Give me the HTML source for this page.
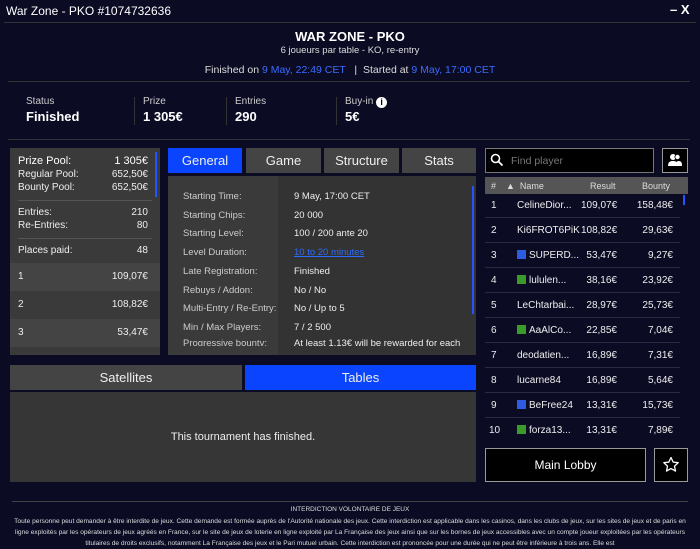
<!DOCTYPE html>
<html><head><meta charset="utf-8"><style>
*{margin:0;padding:0;box-sizing:border-box}
body{width:700px;height:546px;overflow:hidden;background:#0b0b24;color:#fff;font-family:"Liberation Sans",sans-serif;position:relative}
.a{position:absolute;white-space:nowrap}
.lbl{font-size:10px;color:#ccc}
.val{font-size:13px;font-weight:bold}
.blue{color:#3b6cff}
.tab{position:absolute;height:25px;background:#444;font-size:13px;text-align:center;line-height:25px;color:#eee}
.tab.on{background:#0a44ff}
.kv{font-size:10px;color:#eee}
.row{position:absolute;left:485px;width:115px;height:25px;border-bottom:1px solid #2a2a44}
.pr{position:absolute;font-size:10px;color:#eee}
.sq{display:inline-block;width:9px;height:9px;margin-right:3px;vertical-align:-1px}
</style></head><body>
<div class="a" style="left:6px;top:4px;font-size:12px">War Zone - PKO #1074732636</div>
<div class="a" style="left:670px;top:2px;font-size:13px;font-weight:bold">– X</div>
<div class="a" style="left:4px;top:22px;width:692px;height:1px;background:#333"></div>
<div class="a" style="left:0;top:29px;width:700px;text-align:center;font-size:13px;font-weight:bold">WAR ZONE - PKO</div>
<div class="a" style="left:0;top:45px;width:700px;text-align:center;font-size:9.5px;color:#ddd">6 joueurs par table - KO, re-entry</div>
<div class="a" style="left:0;top:64px;width:700px;text-align:center;font-size:10.5px;color:#ddd">Finished on <span class="blue">9 May, 22:49 CET</span> &nbsp;&nbsp;| &nbsp;Started at <span class="blue">9 May, 17:00 CET</span></div>
<div class="a" style="left:8px;top:81px;width:682px;height:1px;background:#333"></div>
<div class="a lbl" style="left:26px;top:96px">Status</div><div class="a val" style="left:26px;top:109px">Finished</div>
<div class="a" style="left:134px;top:97px;width:1px;height:28px;background:#333"></div>
<div class="a lbl" style="left:143px;top:96px">Prize</div><div class="a val" style="left:143px;top:109px">1 305€</div>
<div class="a" style="left:226px;top:97px;width:1px;height:28px;background:#333"></div>
<div class="a lbl" style="left:235px;top:96px">Entries</div><div class="a val" style="left:235px;top:109px">290</div>
<div class="a" style="left:336px;top:97px;width:1px;height:28px;background:#333"></div>
<div class="a lbl" style="left:345px;top:96px">Buy-in <span style="display:inline-block;width:11px;height:11px;border-radius:50%;background:#fff;color:#000;font-size:9px;font-weight:bold;text-align:center;line-height:11px;vertical-align:-1px">i</span></div><div class="a val" style="left:345px;top:109px">5€</div>
<div class="a" style="left:8px;top:139px;width:682px;height:1px;background:#333"></div>

<!-- left panel -->
<div class="a" style="left:10px;top:148px;width:150px;height:207px;background:#3a3a3a"></div>
<div class="a" style="left:155px;top:152px;width:2px;height:45px;background:#2255ff"></div>
<div class="a" style="left:18px;top:155px;font-size:11px">Prize Pool:</div><div class="a" style="left:110px;top:155px;width:38px;text-align:right;font-size:11px">1 305€</div>
<div class="a kv" style="left:18px;top:169px">Regular Pool:</div><div class="a kv" style="left:100px;top:169px;width:48px;text-align:right">652,50€</div>
<div class="a kv" style="left:18px;top:182px">Bounty Pool:</div><div class="a kv" style="left:100px;top:182px;width:48px;text-align:right">652,50€</div>
<div class="a" style="left:18px;top:200px;width:134px;height:1px;background:#555"></div>
<div class="a kv" style="left:18px;top:207px">Entries:</div><div class="a kv" style="left:100px;top:207px;width:48px;text-align:right">210</div>
<div class="a kv" style="left:18px;top:220px">Re-Entries:</div><div class="a kv" style="left:100px;top:220px;width:48px;text-align:right">80</div>
<div class="a" style="left:18px;top:238px;width:134px;height:1px;background:#555"></div>
<div class="a kv" style="left:18px;top:245px">Places paid:</div><div class="a kv" style="left:100px;top:245px;width:48px;text-align:right">48</div>
<div class="a" style="left:10px;top:263px;width:150px;height:28px;background:#444"></div>
<div class="a" style="left:10px;top:319px;width:150px;height:28px;background:#444"></div>
<div class="a kv" style="left:18px;top:271px">1</div><div class="a kv" style="left:100px;top:271px;width:48px;text-align:right">109,07€</div>
<div class="a kv" style="left:18px;top:299px">2</div><div class="a kv" style="left:100px;top:299px;width:48px;text-align:right">108,82€</div>
<div class="a kv" style="left:18px;top:327px">3</div><div class="a kv" style="left:100px;top:327px;width:48px;text-align:right">53,47€</div>

<!-- tabs -->
<div class="tab on" style="left:168px;top:148px;width:74px">General</div>
<div class="tab" style="left:246px;top:148px;width:75px">Game</div>
<div class="tab" style="left:324px;top:148px;width:75px">Structure</div>
<div class="tab" style="left:402px;top:148px;width:74px">Stats</div>
<div class="a" style="left:168px;top:176px;width:110px;height:179px;background:#3a3a3a"></div>
<div class="a" style="left:278px;top:176px;width:198px;height:179px;background:#333;overflow:hidden"></div>
<div class="a" style="left:472px;top:186px;width:2px;height:128px;background:#2255ff"></div>
<div style="position:absolute;left:183px;top:188px;font-size:9.5px;color:#ccc;line-height:18.7px">Starting Time:<br>Starting Chips:<br>Starting Level:<br>Level Duration:<br>Late Registration:<br>Rebuys / Addon:<br>Multi-Entry / Re-Entry:<br>Min / Max Players:</div>
<div style="position:absolute;left:294px;top:188px;font-size:9.5px;color:#eee;line-height:18.7px">9 May, 17:00 CET<br>20 000<br>100 / 200 ante 20<br><span style="color:#2a6cff;text-decoration:underline">10 to 20 minutes</span><br>Finished<br>No / No<br>No / Up to 5<br>7 / 2 500</div>
<div class="a" style="left:168px;top:338px;width:308px;height:8px;overflow:hidden"><div style="position:absolute;left:15px;top:0;font-size:9.5px;color:#ccc">Progressive bounty:</div><div style="position:absolute;left:126px;top:0;font-size:9.5px;color:#eee">At least 1,13€ will be rewarded for each</div></div>

<div class="tab" style="left:10px;top:365px;width:232px">Satellites</div>
<div class="tab on" style="left:245px;top:365px;width:231px">Tables</div>
<div class="a" style="left:10px;top:392px;width:466px;height:90px;background:#363636"></div>
<div class="a" style="left:10px;top:431px;width:466px;text-align:center;font-size:11px;color:#eee">This tournament has finished.</div>

<!-- right -->
<div class="a" style="left:485px;top:148px;width:169px;height:25px;background:#000;border:1px solid #777"></div>
<svg class="a" style="left:490px;top:153px" width="14" height="14" viewBox="0 0 14 14"><circle cx="5.5" cy="5.5" r="4" fill="none" stroke="#fff" stroke-width="1.6"/><path d="M8.5 8.5L12.5 12.5" stroke="#fff" stroke-width="1.8"/></svg>
<div class="a" style="left:511px;top:155px;font-size:10.5px;color:#777">Find player</div>
<div class="a" style="left:662px;top:148px;width:26px;height:25px;background:#000;border:1px solid #999"></div>
<svg class="a" style="left:667px;top:153px" width="16" height="14" viewBox="0 0 16 14"><circle cx="6" cy="4" r="3" fill="#fff"/><path d="M1 13c0-4 2-5 5-5s5 1 5 5z" fill="#fff"/><circle cx="10.5" cy="4" r="2.6" fill="#fff" stroke="#000" stroke-width=".8"/><path d="M9 13c0-3 1-5 2-5c3 0 4 1 4 5z" fill="#fff"/></svg>
<div class="a" style="left:485px;top:177px;width:203px;height:17px;background:#555"></div>
<div class="a" style="left:491px;top:181px;font-size:9px;color:#ddd">#&nbsp;&nbsp;&nbsp;&nbsp;▲&nbsp;&nbsp;Name</div>
<div class="a" style="left:590px;top:181px;font-size:9px;color:#ddd">Result</div>
<div class="a" style="left:642px;top:181px;font-size:9px;color:#ddd">Bounty</div>
<div class="a" style="left:683px;top:195px;width:2px;height:10px;background:#2255ff"></div>
<div style="position:absolute;left:485px;top:193px;width:195px;font-size:10px;color:#eee">
<div style="height:25px;border-bottom:1px solid #2a2a44;position:relative"><span class="a" style="left:6px;top:7px">1</span><span class="a" style="left:32px;top:7px">CelineDior...</span><span class="a" style="left:96px;top:7px;width:36px;text-align:right">109,07€</span><span class="a" style="left:148px;top:7px;width:40px;text-align:right">158,48€</span></div>
<div style="height:25px;border-bottom:1px solid #2a2a44;position:relative"><span class="a" style="left:6px;top:7px">2</span><span class="a" style="left:32px;top:7px">Ki6FROT6PiK</span><span class="a" style="left:96px;top:7px;width:36px;text-align:right">108,82€</span><span class="a" style="left:148px;top:7px;width:40px;text-align:right">29,63€</span></div>
<div style="height:25px;border-bottom:1px solid #2a2a44;position:relative"><span class="a" style="left:6px;top:7px">3</span><span class="a" style="left:32px;top:7px"><i class="sq" style="background:#2f5be0"></i>SUPERD...</span><span class="a" style="left:96px;top:7px;width:36px;text-align:right">53,47€</span><span class="a" style="left:148px;top:7px;width:40px;text-align:right">9,27€</span></div>
<div style="height:25px;border-bottom:1px solid #2a2a44;position:relative"><span class="a" style="left:6px;top:7px">4</span><span class="a" style="left:32px;top:7px"><i class="sq" style="background:#3a9a2a"></i>lululen...</span><span class="a" style="left:96px;top:7px;width:36px;text-align:right">38,16€</span><span class="a" style="left:148px;top:7px;width:40px;text-align:right">23,92€</span></div>
<div style="height:25px;border-bottom:1px solid #2a2a44;position:relative"><span class="a" style="left:6px;top:7px">5</span><span class="a" style="left:32px;top:7px">LeChtarbai...</span><span class="a" style="left:96px;top:7px;width:36px;text-align:right">28,97€</span><span class="a" style="left:148px;top:7px;width:40px;text-align:right">25,73€</span></div>
<div style="height:25px;border-bottom:1px solid #2a2a44;position:relative"><span class="a" style="left:6px;top:7px">6</span><span class="a" style="left:32px;top:7px"><i class="sq" style="background:#3a9a2a"></i>AaAlCo...</span><span class="a" style="left:96px;top:7px;width:36px;text-align:right">22,85€</span><span class="a" style="left:148px;top:7px;width:40px;text-align:right">7,04€</span></div>
<div style="height:25px;border-bottom:1px solid #2a2a44;position:relative"><span class="a" style="left:6px;top:7px">7</span><span class="a" style="left:32px;top:7px">deodatien...</span><span class="a" style="left:96px;top:7px;width:36px;text-align:right">16,89€</span><span class="a" style="left:148px;top:7px;width:40px;text-align:right">7,31€</span></div>
<div style="height:25px;border-bottom:1px solid #2a2a44;position:relative"><span class="a" style="left:6px;top:7px">8</span><span class="a" style="left:32px;top:7px">lucarne84</span><span class="a" style="left:96px;top:7px;width:36px;text-align:right">16,89€</span><span class="a" style="left:148px;top:7px;width:40px;text-align:right">5,64€</span></div>
<div style="height:25px;border-bottom:1px solid #2a2a44;position:relative"><span class="a" style="left:6px;top:7px">9</span><span class="a" style="left:32px;top:7px"><i class="sq" style="background:#2f5be0"></i>BeFree24</span><span class="a" style="left:96px;top:7px;width:36px;text-align:right">13,31€</span><span class="a" style="left:148px;top:7px;width:40px;text-align:right">15,73€</span></div>
<div style="height:25px;position:relative"><span class="a" style="left:4px;top:7px">10</span><span class="a" style="left:32px;top:7px"><i class="sq" style="background:#3a9a2a"></i>forza13...</span><span class="a" style="left:96px;top:7px;width:36px;text-align:right">13,31€</span><span class="a" style="left:148px;top:7px;width:40px;text-align:right">7,89€</span></div>
</div>
<div class="a" style="left:485px;top:448px;width:161px;height:34px;background:#000;border:1px solid #999;text-align:center;line-height:32px;font-size:12px">Main Lobby</div>
<div class="a" style="left:654px;top:448px;width:34px;height:34px;background:#000;border:1px solid #999"></div>
<svg class="a" style="left:662px;top:456px" width="18" height="18" viewBox="0 0 18 18"><path d="M9 1.5l2.2 4.6 5 .6-3.7 3.4 1 5-4.5-2.5-4.5 2.5 1-5L1.8 6.7l5-.6z" fill="none" stroke="#fff" stroke-width="1.3" stroke-linejoin="round"/></svg>

<div class="a" style="left:12px;top:501px;width:676px;height:1px;background:#444"></div>
<div class="a" style="left:0;top:506px;width:700px;text-align:center;font-size:6.5px;color:#ddd">INTERDICTION VOLONTAIRE DE JEUX</div>
<div style="position:absolute;left:10px;top:516px;width:680px;text-align:center;font-size:6.6px;line-height:11px;color:#ddd">Toute personne peut demander à être interdite de jeux. Cette demande est formée auprès de l'Autorité nationale des jeux. Cette interdiction est applicable dans les casinos, dans les clubs de jeux, sur les sites de jeux et de paris en ligne exploités par les opérateurs de jeux agréés en France, sur le site de jeux de loterie en ligne exploité par La Française des jeux ainsi que sur les bornes de jeux accessibles avec un compte joueur exploitées par les opérateurs titulaires de droits exclusifs, notamment La Française des jeux et le Pari mutuel urbain. Cette interdiction est prononcée pour une durée qui ne peut être inférieure à trois ans. Elle est</div>
</body></html>
